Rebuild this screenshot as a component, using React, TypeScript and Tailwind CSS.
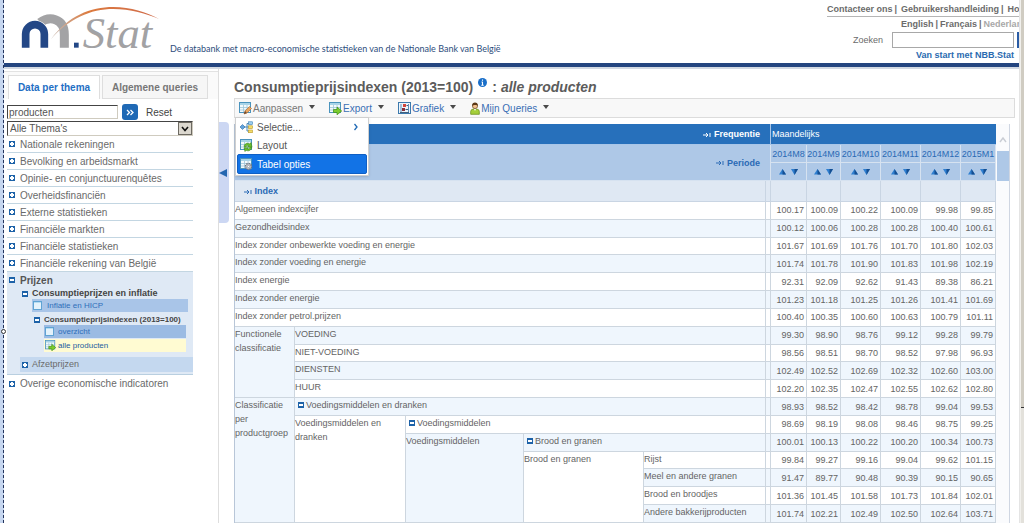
import React from "react";

const months = ["2014M8", "2014M9", "2014M10", "2014M11", "2014M12", "2015M1"];

type LabelCell = { text: string; col?: number; row?: number; toggle?: boolean };
type Row = { labels: LabelCell[]; values: string[] };

const rows: Row[] = [
  { labels: [{ text: "Algemeen indexcijfer", col: 5 }], values: ["100.17", "100.09", "100.22", "100.09", "99.98", "99.85"] },
  { labels: [{ text: "Gezondheidsindex", col: 5 }], values: ["100.12", "100.06", "100.28", "100.28", "100.40", "100.61"] },
  { labels: [{ text: "Index zonder onbewerkte voeding en energie", col: 5 }], values: ["101.67", "101.69", "101.76", "101.70", "101.80", "102.03"] },
  { labels: [{ text: "Index zonder voeding en energie", col: 5 }], values: ["101.74", "101.78", "101.90", "101.83", "101.98", "102.19"] },
  { labels: [{ text: "Index energie", col: 5 }], values: ["92.31", "92.09", "92.62", "91.43", "89.38", "86.21"] },
  { labels: [{ text: "Index zonder energie", col: 5 }], values: ["101.23", "101.18", "101.25", "101.26", "101.41", "101.69"] },
  { labels: [{ text: "Index zonder petrol.prijzen", col: 5 }], values: ["100.40", "100.35", "100.60", "100.63", "100.79", "101.11"] },
  { labels: [{ text: "Functionele classificatie", row: 4 }, { text: "VOEDING", col: 4 }], values: ["99.30", "98.90", "98.76", "99.12", "99.28", "99.79"] },
  { labels: [{ text: "NIET-VOEDING", col: 4 }], values: ["98.56", "98.51", "98.70", "98.52", "97.98", "96.93"] },
  { labels: [{ text: "DIENSTEN", col: 4 }], values: ["102.49", "102.52", "102.69", "102.32", "102.60", "103.00"] },
  { labels: [{ text: "HUUR", col: 4 }], values: ["102.20", "102.35", "102.47", "102.55", "102.62", "102.80"] },
  { labels: [{ text: "Classificatie per productgroep", row: 7 }, { text: "Voedingsmiddelen en dranken", col: 4, toggle: true }], values: ["98.93", "98.52", "98.42", "98.78", "99.04", "99.53"] },
  { labels: [{ text: "Voedingsmiddelen en dranken", row: 6 }, { text: "Voedingsmiddelen", col: 3, toggle: true }], values: ["98.69", "98.19", "98.08", "98.46", "98.75", "99.25"] },
  { labels: [{ text: "Voedingsmiddelen", row: 5 }, { text: "Brood en granen", col: 2, toggle: true }], values: ["100.01", "100.13", "100.22", "100.20", "100.34", "100.73"] },
  { labels: [{ text: "Brood en granen", row: 4 }, { text: "Rijst" }], values: ["99.84", "99.27", "99.16", "99.04", "99.62", "101.15"] },
  { labels: [{ text: "Meel en andere granen" }], values: ["91.47", "89.77", "90.48", "90.39", "90.15", "90.65"] },
  { labels: [{ text: "Brood en broodjes" }], values: ["101.36", "101.45", "101.58", "101.73", "101.84", "102.01"] },
  { labels: [{ text: "Andere bakkerijproducten" }], values: ["101.74", "102.21", "102.49", "102.50", "102.64", "103.71"] },
];

const themes = [
  "Nationale rekeningen",
  "Bevolking en arbeidsmarkt",
  "Opinie- en conjunctuurenquêtes",
  "Overheidsfinanciën",
  "Externe statistieken",
  "Financiële markten",
  "Financiële statistieken",
  "Financiële rekening van België",
];

function Toggle({ open = false }: { open?: boolean }) {
  return (
    <svg width="6" height="6" viewBox="0 0 6 6" className="inline-block shrink-0" aria-hidden="true" shapeRendering="crispEdges">
      <rect width="6" height="6" fill="#1d62a8" />
      <rect x="1" y="2" width="4" height="2" fill="#fff" />
      {!open && <rect x="2" y="1" width="2" height="4" fill="#fff" />}
    </svg>
  );
}

function Caret() {
  return (
    <svg width="6" height="4" viewBox="0 0 6 4" aria-hidden="true">
      <path d="M0 0H6L3 4Z" fill="#4a4a4a" />
    </svg>
  );
}

function Sheet() {
  return (
    <>
      <rect x=".5" y=".5" width="11" height="10" fill="#f3fafc" stroke="#4a93bd" />
      <rect x="1" y="1" width="10" height="2" fill="#a9d4e8" />
      <path d="M1 5.5H11M1 8H11M4.500 3V10M8 3V10" stroke="#9ec5d8" strokeWidth=".8" />
    </>
  );
}

function EditIcon() {
  return (
    <svg width="13" height="13" viewBox="0 0 13 13" aria-hidden="true">
      <Sheet />
      <path d="M5 12L6 9L10.500 4.500L12.500 6.500L8 11Z" fill="#e9a560" stroke="#a8652c" strokeWidth=".6" />
      <path d="M5 12L6 9L8 11Z" fill="#6b4a33" />
    </svg>
  );
}

function ExportIcon({ size = 13 }: { size?: number }) {
  return (
    <svg width={size} height={size} viewBox="0 0 13 13" aria-hidden="true">
      <Sheet />
      <path d="M4.500 7.500H8V5L12.700 9L8 12.800V10.500H4.500Z" fill="#7ccb2d" stroke="#3f8f16" strokeWidth=".7" />
    </svg>
  );
}

function ChartIcon() {
  return (
    <svg width="13" height="13" viewBox="0 0 13 13" aria-hidden="true">
      <rect x=".5" y=".5" width="12" height="11" fill="#eef5fb" stroke="#3c79ad" />
      <path d="M3 2V10M10.500 2V10" stroke="#5b8fba" />
      <rect x="5" y="2" width="3" height="3" fill="#d3453b" />
      <rect x="4" y="6" width="3" height="3" fill="#8a2f3a" />
      <path d="M2 10.500H11M8.500 3.500H10M7.500 7.500H10" stroke="#44617d" />
    </svg>
  );
}

function UserIcon() {
  return (
    <svg width="10" height="13" viewBox="0 0 10 13" aria-hidden="true">
      <path d="M.7 12.300V9.500C.7 7.500 2.500 7 5 7S9.300 7.500 9.300 9.500V12.300Z" fill="#a5cf3a" stroke="#6f9320" strokeWidth=".8" />
      <circle cx="5" cy="4" r="2.600" fill="#f0c08f" stroke="#5a3714" strokeWidth=".6" />
      <path d="M2.200 4C1.800 1.500 3.500.5 5 .5S8.200 1.500 7.800 4C7 2.800 3.500 2.800 2.200 4Z" fill="#5b3715" />
      <path d="M4 7L5 9L6 7Z" fill="#fff" />
    </svg>
  );
}

function SelectionIcon() {
  return (
    <svg width="13" height="13" viewBox="0 0 13 13" aria-hidden="true">
      <path d="M4 6H7M7 2.500V10M7 2.500H9M7 6H9M7 10H9" stroke="#4a89b8" fill="none" />
      <path d="M0 6L2.500 3.500L5 6L2.500 8.500Z" fill="#62a3dc" stroke="#2c6ca8" strokeWidth=".6" />
      <rect x="8.500" y=".8" width="4" height="2.700" fill="#9fd0ef" stroke="#3a7fb4" strokeWidth=".6" />
      <rect x="8.500" y="4.800" width="4" height="2.700" fill="#f5dd69" stroke="#b8962a" strokeWidth=".6" />
      <rect x="8.500" y="9" width="4" height="2.700" fill="#f5dd69" stroke="#b8962a" strokeWidth=".6" />
    </svg>
  );
}

function LayoutIcon() {
  return (
    <svg width="13" height="13" viewBox="0 0 13 13" aria-hidden="true">
      <Sheet />
      <path d="M4 7.500C4.500 4.500 7.500 3.500 9.500 5L11 3.500L12 8H7.700L8.600 6.500C7.400 6 6.500 6.700 6 8Z" fill="#6cbf2b" stroke="#38851a" strokeWidth=".6" />
      <path d="M11.800 8.500C11 11.500 8.500 12.500 6.200 11.300L5 12.500L4 8.800H8L7.200 9.900C8.400 10.300 9.300 9.700 9.800 8.500Z" fill="#6cbf2b" stroke="#38851a" strokeWidth=".6" />
    </svg>
  );
}

function OptionsIcon() {
  return (
    <svg width="13" height="13" viewBox="0 0 13 13" aria-hidden="true">
      <Sheet />
      <circle cx="8.500" cy="8.500" r="3" fill="#c9ccd2" stroke="#70757e" strokeDasharray="1.400 .9" strokeWidth="1.500" />
      <circle cx="8.500" cy="8.500" r="1.100" fill="#fff" stroke="#7b8088" strokeWidth=".5" />
    </svg>
  );
}

function PageIcon() {
  return (
    <svg width="9" height="9" viewBox="0 0 9 9" aria-hidden="true">
      <rect x=".5" y=".5" width="8" height="8" fill="#e4f2fb" stroke="#5fa3d3" />
      <rect x="1" y="1" width="7" height="1" fill="#b5dcf2" />
    </svg>
  );
}

function PivotIcon() {
  return (
    <svg width="8" height="6" viewBox="0 0 8 6" className="inline-block" aria-hidden="true">
      <path d="M0 3H5M3 1L5 3L3 5M7 1V5" stroke="currentColor" fill="none" />
    </svg>
  );
}

function Logo() {
  return (
    <svg width="165" height="56" viewBox="12 0 495 168" role="img" aria-label="NBB.Stat">
      <defs>
        <linearGradient id="arc" x1="0" x2="1">
          <stop offset="0" stopColor="#c9bdb6" />
          <stop offset=".35" stopColor="#dc7a3e" />
          <stop offset="1" stopColor="#cf6a4a" />
        </linearGradient>
      </defs>
      <path d="M120 68C146 48 193 52 193 104V143" fill="none" stroke="#a3a3a5" strokeWidth="27" />
      <path d="M77 143V102A28 28 0 0 1 133 102V143" fill="none" stroke="#fff" strokeWidth="27" />
      <path d="M77 143V102A28 28 0 0 1 133 102V143" fill="none" stroke="#234786" strokeWidth="23" />
      <path d="M153 118C203 48 272 21 340 21C392 21 440 37 477 57C440 41 390 27 340 27C272 27 206 56 153 118Z" fill="url(#arc)" />
      <rect x="222" y="128" width="14" height="15" fill="#234786" />
      <text x="248" y="143" fontFamily="'Liberation Serif', serif" fontStyle="italic" fontSize="134" fill="#a2a2a4">
        Stat
      </text>
    </svg>
  );
}

function ToolButton({ icon, label, active = false }: { icon: React.ReactNode; label: string; active?: boolean }) {
  return (
    <button type="button" className={`flex items-center gap-[1px] whitespace-nowrap ${active ? "text-[#777]" : "text-[#3a6fb5]"}`}>
      {icon}
      <span>{label}</span>
      <span className="ml-[5px] pb-[2px]">
        <Caret />
      </span>
    </button>
  );
}

function Header() {
  return (
    <header className="flex h-[69px] shrink-0 border-b-[2px] border-[#d3d9e2]">
      <div className="flex min-w-0 flex-1 items-start border-b-[4px] border-[#24457f]">
        <div className="shrink-0">
          <Logo />
        </div>
        <p className="mt-[43px] whitespace-nowrap pl-[1px] font-[Lato,sans-serif] text-[9px] leading-[12px] text-[#2d4d7c]">
          De databank met macro-economische statistieken van de Nationale Bank van België
        </p>
        <div className="ml-auto w-[192px] text-[9px] font-bold leading-[12px] text-[#6b6b6b]">
          <nav className="flex gap-[2px] overflow-hidden whitespace-nowrap border-b border-[#b5b5b5] pb-[1px] pt-[3px]">
            <a href="#contact">Contacteer ons</a>|<a href="#gids" className="ml-[2px]">Gebruikershandleiding</a>|
            <a href="#home" className="ml-[2px]">Home</a>
          </nav>
          <nav className="flex gap-[2px] overflow-hidden whitespace-nowrap pl-[74px] pt-[1px]">
            <a href="#en">English</a>|<a href="#fr">Français</a>|<a href="#nl" className="text-[#a8a8a8]">Nederlands</a>
          </nav>
          <form className="mt-[2px] flex items-center">
            <label htmlFor="zoek" className="w-[65px] pl-[26px] text-[9px] font-normal">Zoeken</label>
            <input id="zoek" type="text" className="h-[16px] min-w-0 flex-1 border border-[#a8a8a8] bg-white px-[2px]" />
            <button type="button" aria-label="Zoek" className="ml-[3px] h-[16px] w-[2px] bg-[#2a5ca5]" />
          </form>
          <a href="#start" className="mt-[1px] block pr-[5px] text-right text-[#2a6ab0]">Van start met NBB.Stat</a>
        </div>
      </div>
    </header>
  );
}

function Sidebar() {
  const item = "flex h-[17px] items-center gap-[5px] border-b border-[#c3d6e2] pl-[2px]";
  return (
    <aside className="w-[215px] shrink-0 border-r border-[#dedede] text-[10px] text-[#6a6a6a]">
      <div className="mt-[2px] flex h-[28px] items-end border-t border-[#e2e2e2] bg-[#fafafa] pl-[4px] font-bold">
        <button type="button" className="h-[24px] w-[92px] border border-b-0 border-[#dedede] bg-white text-[#1f6fc4]">Data per thema</button>
        <button type="button" className="ml-[2px] h-[24px] w-[106px] border border-[#dedede] bg-[#f6f6f6] text-[#777]">Algemene queries</button>
      </div>
      <div className="pl-[3px] pr-[25px] pt-[5px]">
        <div className="flex items-center">
          <input
            aria-label="Zoek in thema's"
            defaultValue="producten"
            className="h-[14px] w-[111px] border border-[#cfcbbf] border-l-[#444] border-t-[#444] bg-white px-[1px] text-[10px] text-[#555]"
          />
          <button type="button" aria-label="Zoek" className="ml-[4px] h-[16px] w-[16px] rounded-[3px] bg-[#1f69b5]">
            <svg width="16" height="16" viewBox="0 0 16 16" aria-hidden="true">
              <path d="M5 6L7.500 8.500L5 11M8.500 6L11 8.500L8.500 11" stroke="#fff" strokeWidth="1.300" fill="none" />
            </svg>
          </button>
          <button type="button" className="ml-[8px] text-[#444]">Reset</button>
        </div>
        <div className="relative mt-[1px] h-[15px] border border-[#cfcbbf] border-l-[#444] border-t-[#444]">
          <select aria-label="Thema" className="block h-full w-full appearance-none bg-white pl-[2px] text-[10px] leading-[13px] text-[#555]">
            <option>Alle Thema's</option>
          </select>
          <span className="pointer-events-none absolute bottom-0 right-0 top-0 flex w-[14px] items-center justify-center border border-[#6d6a62] bg-[#dcd8cf]">
            <svg width="8" height="6" viewBox="0 0 8 6" aria-hidden="true">
              <path d="M1 1L4 4.500L7 1" stroke="#111" strokeWidth="1.600" fill="none" />
            </svg>
          </span>
        </div>
        <ul>
          {themes.map((t) => (
            <li key={t} className={item}>
              <Toggle />
              <a href="#thema">{t}</a>
            </li>
          ))}
          <li className="border-b border-[#b9cfe0] bg-[#dfe9f5] pb-[2px]">
            <a href="#prijzen" className="flex h-[16px] items-center gap-[5px] pl-[2px] font-bold text-[#555]">
              <Toggle open />
              Prijzen
            </a>
            <ul className="pl-[13px]">
              <li>
                <a href="#inflatie" className="flex h-[11px] items-center gap-[4px] pl-[2px] text-[9px] font-bold text-[#444]">
                  <Toggle open />
                  Consumptieprijzen en inflatie
                </a>
                <a href="#hicp" className="ml-[12px] mr-[5px] flex h-[13px] items-center gap-[5px] bg-[#a9c5e8] pl-[1px] text-[8px] text-[#2f6fba]">
                  <PageIcon />
                  Inflatie en HICP
                </a>
                <div className="ml-[12px] mr-[7px] mt-[2px]">
                  <a href="#indexen" className="flex h-[11px] items-center gap-[4px] whitespace-nowrap pl-[2px] text-[8px] font-bold text-[#444]">
                    <Toggle open />
                    Consumptieprijsindexen (2013=100)
                  </a>
                  <a href="#overzicht" className="ml-[12px] flex h-[13px] items-center gap-[4px] bg-[#9bbbe3] pl-[1px] text-[8px] text-[#2f6fba]">
                    <PageIcon />
                    overzicht
                  </a>
                  <a href="#alle" className="ml-[12px] mt-[1px] flex h-[13px] items-center gap-[2px] bg-[#fffbd2] pl-[1px] text-[8px] text-[#255c9e]">
                    <ExportIcon size={11} />
                    alle producten
                  </a>
                </div>
              </li>
              <li className="mt-[5px]">
                <a href="#afzet" className="flex h-[15px] items-center gap-[4px] bg-[#c4d8ef] pl-[2px] text-[9px]">
                  <Toggle />
                  Afzetprijzen
                </a>
              </li>
            </ul>
          </li>
          <li className="flex h-[17px] items-center gap-[5px] pl-[2px]">
            <Toggle />
            <a href="#overige">Overige economische indicatoren</a>
          </li>
        </ul>
      </div>
    </aside>
  );
}

function Toolbar() {
  return (
    <div className="relative mr-[4px] flex h-[20px] items-center border border-[#dcdcdc] bg-[#f8f8f8] pl-[4px] text-[10px]">
      <div className="flex gap-[14px]">
        <ToolButton icon={<EditIcon />} label="Aanpassen" active />
        <ToolButton icon={<ExportIcon />} label="Export" />
        <ToolButton icon={<ChartIcon />} label="Grafiek" />
        <ToolButton icon={<UserIcon />} label="Mijn Queries" />
      </div>
      <ul role="menu" className="absolute left-0 top-[18px] z-10 w-[134px] border border-[#cfcfcf] bg-white px-[1px] pb-[1px] text-[#555] shadow-sm">
        <li>
          <button type="button" role="menuitem" className="flex h-[18px] w-full items-center gap-[4px] pl-[3px]">
            <SelectionIcon />
            Selectie...
            <svg width="4" height="8" viewBox="0 0 4 8" className="ml-auto mr-[9px]" aria-hidden="true">
              <path d="M.5 1L3 4L.5 7" stroke="#1f69b5" strokeWidth="1.300" fill="none" />
            </svg>
          </button>
        </li>
        <li>
          <button type="button" role="menuitem" className="flex h-[18px] w-full items-center gap-[4px] pl-[3px]">
            <LayoutIcon />
            Layout
          </button>
        </li>
        <li>
          <button type="button" role="menuitem" className="flex h-[20px] w-full items-center gap-[4px] rounded-[2px] border border-[#0f5fc4] bg-[#1273e6] pl-[2px] text-white">
            <OptionsIcon />
            Tabel opties
          </button>
        </li>
      </ul>
    </div>
  );
}

function SortArrows() {
  return (
    <span className="flex items-center justify-center gap-[5px]">
      <button type="button" aria-label="Oplopend sorteren">
        <svg width="7" height="6" viewBox="0 0 7 6" className="block" aria-hidden="true">
          <path d="M3.500 0L7 5.500H0Z" fill="#2f7fd0" />
          <path d="M3.500 0L7 5.500H3.500Z" fill="#154f92" />
        </svg>
      </button>
      <button type="button" aria-label="Aflopend sorteren">
        <svg width="7" height="6" viewBox="0 0 7 6" className="block" aria-hidden="true">
          <path d="M0 0H7L3.500 6Z" fill="#2f7fd0" />
          <path d="M3.500 0H7L3.500 6Z" fill="#154f92" />
        </svg>
      </button>
    </span>
  );
}

function DataTable() {
  const head = "border-b border-r border-[#d6e2f0] bg-[#aec8e7] font-normal text-[#2a6ab5]";
  return (
    <table className="h-[399px] w-full table-fixed border-separate border-spacing-0 border-l border-[#b8c6d8] text-[9px] leading-[14px] text-[#646464]">
      <colgroup>
        <col className="w-[60px]" />
        <col className="w-[111px]" />
        <col className="w-[118px]" />
        <col className="w-[120px]" />
        <col />
        <col className="w-[5px]" />
        <col className="w-[36px]" />
        <col className="w-[34px]" />
        <col className="w-[40px]" />
        <col className="w-[40px]" />
        <col className="w-[40px]" />
        <col className="w-[35px]" />
      </colgroup>
      <thead>
        <tr className="h-[21px] bg-[#2770bb] text-white">
          <th colSpan={6} className="border-b border-r border-[#a9c6e8] pr-[10px] text-right font-bold">
            <PivotIcon /> Frequentie
          </th>
          <th colSpan={6} className="border-b border-[#a9c6e8] pl-[1px] text-left font-normal">Maandelijks</th>
        </tr>
        <tr className="h-[18px]">
          <th colSpan={6} rowSpan={2} className="border-b border-r border-[#d6e2f0] bg-[#aec8e7] pr-[10px] text-right font-bold text-[#2a6ab5]">
            <PivotIcon /> Periode
          </th>
          {months.map((m) => (
            <th key={m} className={head}>{m}</th>
          ))}
        </tr>
        <tr className="h-[18px]">
          {months.map((m) => (
            <th key={m} className={head}>
              <SortArrows />
            </th>
          ))}
        </tr>
        <tr className="h-[21px] bg-[#dfe8f3]">
          <th colSpan={5} className="border-b border-r border-[#c9d5e3] pl-[9px] text-left font-bold text-[#2a6ab5]">
            <PivotIcon /> Index
          </th>
          <td className="border-b border-r border-[#c9d5e3]" />
          {months.map((m) => (
            <td key={m} className="border-b border-r border-[#c9d5e3]" />
          ))}
        </tr>
      </thead>
      <tbody>
        {rows.map((row, i) => {
          const bg = i % 2 ? "bg-[#eff6fd]" : "bg-white";
          const cell = `border-b border-r border-[#cdd6df] ${bg}`;
          return (
            <tr key={i}>
              {row.labels.map((l) => (
                <th
                  key={l.text + (l.toggle ? "+" : "")}
                  scope="row"
                  colSpan={l.col}
                  rowSpan={l.row}
                  className={`${cell} text-left align-top font-normal`}
                >
                  {l.toggle ? (
                    <span className="flex items-center gap-[2px] pl-[3px]">
                      <Toggle open />
                      {l.text}
                    </span>
                  ) : (
                    l.text
                  )}
                </th>
              ))}
              <td className={cell} />
              {row.values.map((v, j) => (
                <td key={j} className={`${cell} pr-[2px] text-right align-middle`}>
                  {v}
                </td>
              ))}
            </tr>
          );
        })}
      </tbody>
    </table>
  );
}

function Content() {
  return (
    <main className="ml-[5px] flex min-w-0 flex-1 flex-col">
      <h1 className="mb-[2px] mt-[9px] flex h-[18px] items-center whitespace-nowrap text-[14px] font-bold text-[#5c5c5c]">
        Consumptieprijsindexen (2013=100)
        <svg width="9" height="9" viewBox="0 0 9 9" className="mb-[9px] ml-[5px] mr-[5px]" aria-hidden="true">
          <circle cx="4.500" cy="4.500" r="4.500" fill="#1a6fc9" />
          <path d="M4.500 1.500V2.800M4.500 3.800V7.300M3.500 4H4.500M3.300 7.200H5.700" stroke="#fff" strokeWidth="1.100" />
        </svg>
        <span className="mr-[4px]">:</span>
        <em>alle producten</em>
      </h1>
      <Toolbar />
      <div className="mr-[9px] mt-[6px] flex min-h-0 flex-1 overflow-hidden border-r border-[#cfd6e2]">
        <div className="min-w-0 flex-1">
          <DataTable />
        </div>
        <div className="flex w-[13px] flex-col bg-[#fafbfd] pl-[1px]">
          <svg width="12" height="27" viewBox="0 0 12 27" aria-hidden="true">
            <path d="M3 18L6 14L9 18" stroke="#c9cdd4" strokeWidth="1.400" fill="none" />
          </svg>
          <div className="h-[30px] bg-[#aec8e7]" />
        </div>
      </div>
    </main>
  );
}

export default function App() {
  return (
    <div className="flex h-screen overflow-hidden bg-white font-['Liberation_Sans',Arial,sans-serif]">
      <div className="relative w-[4px] shrink-0 border-r border-dashed border-[#22335c] bg-[#c6d6ef]">
        <span className="absolute left-[1px] top-[329px] h-[5px] w-[5px] rounded-full border border-[#333] bg-white" />
      </div>
      <div className="flex min-w-0 flex-1 flex-col">
        <Header />
        <div className="flex min-h-0 flex-1">
          <Sidebar />
          <button type="button" aria-label="Paneel verbergen" className="mt-[53px] flex h-[101px] w-[10px] shrink-0 items-center rounded-r-[4px] bg-[#ccd7f3]">
            <svg width="8" height="8" viewBox="0 0 8 8" aria-hidden="true">
              <path d="M8 0V8L0 4Z" fill="#2466b0" />
            </svg>
          </button>
          <Content />
        </div>
      </div>
      <div className="flex w-[5px] shrink-0 flex-col border-l border-[#e4e4e4] bg-[#f1f0ec] pl-[1px]">
        <div className="h-[408px] border-b border-[#333] bg-[#d0ccc2]" />
        <div className="flex-1 bg-[#e3e1db]" />
      </div>
    </div>
  );
}
